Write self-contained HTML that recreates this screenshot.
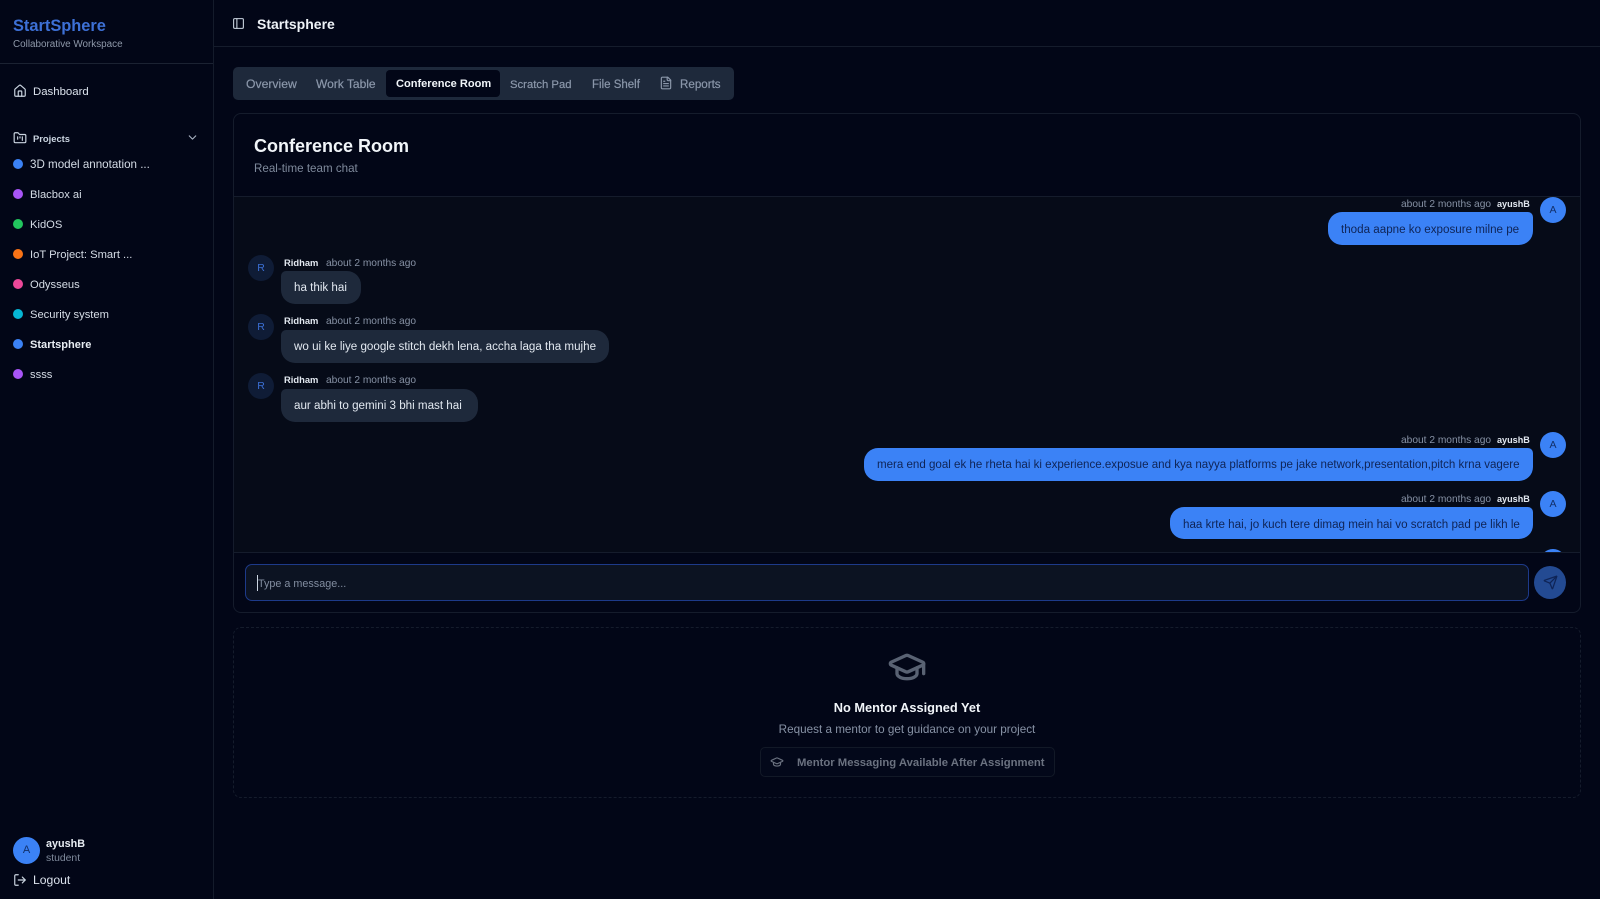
<!DOCTYPE html>
<html><head><meta charset="utf-8"><title>Startsphere</title>
<style>
*{box-sizing:border-box;margin:0;padding:0}
html,body{width:1600px;height:899px;overflow:hidden;background:#020617;font-family:"Liberation Sans",sans-serif;color:#e2e8f0}
#w{position:absolute;left:0;top:0;width:1600px;height:899px;filter:blur(.3px)}
.a{position:absolute}
.t{position:absolute;height:20px;line-height:20px;white-space:nowrap;font-size:12.4px}
.dot{position:absolute;left:13px;width:10px;height:10px;border-radius:50%}
.b{position:absolute;height:33px;line-height:35px;font-size:11.62px;white-space:nowrap}
.bo{background:#1e293b;color:#e2e8f0;border-radius:5px 14px 14px 14px;padding-left:13px;line-height:34px}
.bm{background:#3b82f6;color:#0f2456;border-radius:14px 5px 14px 14px;padding-left:13px}
.av{position:absolute;width:26px;height:26px;border-radius:50%;text-align:center;line-height:26px;font-size:10.5px}
.ar{background:#0f1c36;color:#3b6fd4;left:248px}
.am{background:#3b82f6;color:#12306b;left:1540px}
.nm{font-size:9.4px;font-weight:bold;color:#e2e8f0}
.tm{font-size:10.2px;color:#8792a5}
.tab{color:#8b97aa;font-weight:500;-webkit-text-stroke:.2px #8b97aa}
.p{left:30px;font-size:11.2px;color:#d5dce6}
svg{position:absolute;fill:none;stroke-linecap:round;stroke-linejoin:round}
</style></head><body><div id="w">

<!-- sidebar -->
<div class="a" style="left:0;top:0;width:214px;height:899px;background:#020617;border-right:1px solid #141b2b"></div>
<div class="a" style="left:0;top:63px;width:213px;height:1px;background:#1b2232"></div>
<div class="t" style="left:13px;top:16px;font-size:16.4px;font-weight:bold;color:#3d70d6">StartSphere</div>
<div class="t" style="left:13px;top:35px;font-size:9.9px;color:#8f99aa">Collaborative Workspace</div>

<svg style="left:13px;top:84px" width="14" height="14" viewBox="0 0 24 24" stroke="#cbd5e1" stroke-width="2"><path d="M15 21v-8a1 1 0 0 0-1-1h-4a1 1 0 0 0-1 1v8"/><path d="M3 10a2 2 0 0 1 .709-1.528l7-5.999a2 2 0 0 1 2.582 0l7 5.999A2 2 0 0 1 21 10v9a2 2 0 0 1-2 2H5a2 2 0 0 1-2-2z"/></svg>
<div class="t" style="left:33px;top:82px;font-size:11.4px;color:#dbe2ec">Dashboard</div>

<svg style="left:13px;top:131px" width="14" height="14" viewBox="0 0 24 24" stroke="#cbd5e1" stroke-width="2"><path d="M20 20a2 2 0 0 0 2-2V8a2 2 0 0 0-2-2h-7.9a2 2 0 0 1-1.69-.9L9.6 3.9A2 2 0 0 0 7.93 3H4a2 2 0 0 0-2 2v13a2 2 0 0 0 2 2Z"/><path d="M8 10v4M12 10v2M16 10v6"/></svg>
<div class="t" style="left:33px;top:129px;font-size:9.4px;font-weight:bold;color:#cbd5e1">Projects</div>
<svg style="left:186px;top:131px" width="13" height="13" viewBox="0 0 24 24" stroke="#aab4c4" stroke-width="2"><path d="m6 9 6 6 6-6"/></svg>

<div class="dot" style="top:159px;background:#3b82f6"></div><div class="t p" style="top:155px;font-size:11.6px">3D model annotation ...</div>
<div class="dot" style="top:189px;background:#a855f7"></div><div class="t p" style="top:185px">Blacbox ai</div>
<div class="dot" style="top:219px;background:#22c55e"></div><div class="t p" style="top:215px">KidOS</div>
<div class="dot" style="top:249px;background:#f97316"></div><div class="t p" style="top:245px">IoT Project: Smart ...</div>
<div class="dot" style="top:279px;background:#ec4899"></div><div class="t p" style="top:275px">Odysseus</div>
<div class="dot" style="top:309px;background:#06b6d4"></div><div class="t p" style="top:305px">Security system</div>
<div class="dot" style="top:339px;background:#3b82f6"></div><div class="t p" style="top:335px;font-size:11.05px;font-weight:bold;color:#e8edf3">Startsphere</div>
<div class="dot" style="top:369px;background:#a855f7"></div><div class="t p" style="top:365px">ssss</div>

<div class="a" style="left:13px;top:837px;width:27px;height:27px;border-radius:50%;background:#3b82f6;color:#12306b;text-align:center;line-height:27px;font-size:11px">A</div>
<div class="t" style="left:46px;top:834px;font-size:10.8px;font-weight:bold;color:#e8edf3">ayushB</div>
<div class="t" style="left:46px;top:849px;font-size:10.4px;color:#7f8a9c">student</div>
<svg style="left:13px;top:873px" width="14" height="14" viewBox="0 0 24 24" stroke="#cbd5e1" stroke-width="2"><path d="M9 21H5a2 2 0 0 1-2-2V5a2 2 0 0 1 2-2h4"/><path d="m16 17 5-5-5-5"/><path d="M21 12H9"/></svg>
<div class="t" style="left:33px;top:870px;font-size:12.2px;color:#dbe2ec">Logout</div>

<!-- header -->
<div class="a" style="left:214px;top:46px;width:1386px;height:1px;background:#151c2c"></div>
<svg style="left:232px;top:17px" width="13" height="13" viewBox="0 0 24 24" stroke="#cbd5e1" stroke-width="2"><rect x="3" y="3" width="18" height="18" rx="2"/><path d="M9 3v18"/></svg>
<div class="t" style="left:257px;top:14px;font-size:14px;font-weight:bold;color:#eef2f7">Startsphere</div>

<!-- tabs -->
<div class="a" style="left:233px;top:67px;width:501px;height:33px;background:#1e293b;border-radius:5px"></div>
<div class="a" style="left:386px;top:70px;width:114px;height:27px;background:#020617;border-radius:4px"></div>
<div class="t tab" style="left:246px;top:74px;font-size:12.2px">Overview</div>
<div class="t tab" style="left:316px;top:74px;font-size:12px">Work Table</div>
<div class="t" style="left:396px;top:74px;font-size:11.05px;font-weight:bold;color:#f1f5f9">Conference Room</div>
<div class="t tab" style="left:510px;top:74.6px;font-size:11.3px">Scratch Pad</div>
<div class="t tab" style="left:592px;top:74.6px;font-size:11.5px">File Shelf</div>
<svg style="left:659px;top:76px" width="14" height="14" viewBox="0 0 24 24" stroke="#8b97aa" stroke-width="2"><path d="M15 2H6a2 2 0 0 0-2 2v16a2 2 0 0 0 2 2h12a2 2 0 0 0 2-2V7Z"/><path d="M14 2v4a2 2 0 0 0 2 2h4"/><path d="M10 9H8M16 13H8M16 17H8"/></svg>
<div class="t tab" style="left:680px;top:74.6px;font-size:11.6px">Reports</div>

<!-- chat card -->
<div class="a" style="left:233px;top:113px;width:1348px;height:500px;border:1px solid #151c2c;border-radius:8px;background:#020617;overflow:hidden">
  <div class="a" style="left:0;top:82px;width:1346px;height:357px;background:#060b18;border-top:1px solid #151c2c;border-bottom:1px solid #151c2c"></div>
  <div class="a" style="left:1306px;top:435px;width:26px;height:26px;border-radius:50%;background:#3b82f6;clip-path:inset(0 0 23px 0)"></div>
</div>
<div class="t" style="left:254px;top:136px;font-size:18px;font-weight:bold;color:#f1f5f9">Conference Room</div>
<div class="t" style="left:254px;top:158.6px;font-size:11.6px;color:#7f8a9c">Real-time team chat</div>

<!-- messages -->
<div class="t tm" style="left:1401px;top:194.5px">about 2 months ago</div><div class="t nm" style="left:1497px;top:193.5px;font-size:9.1px">ayushB</div>
<div class="av am" style="top:197px">A</div>
<div class="b bm" style="left:1328px;top:212px;width:205px">thoda aapne ko exposure milne pe</div>

<div class="av ar" style="top:255px">R</div>
<div class="t nm" style="left:284px;top:252.5px">Ridham</div><div class="t tm" style="left:326px;top:253.5px">about 2 months ago</div>
<div class="b bo" style="left:281px;top:271px;width:80px">ha thik hai</div>

<div class="av ar" style="top:314px">R</div>
<div class="t nm" style="left:284px;top:310.5px">Ridham</div><div class="t tm" style="left:326px;top:311.5px">about 2 months ago</div>
<div class="b bo" style="left:281px;top:330px;width:328px">wo ui ke liye google stitch dekh lena, accha laga tha mujhe</div>

<div class="av ar" style="top:373px">R</div>
<div class="t nm" style="left:284px;top:369.5px">Ridham</div><div class="t tm" style="left:326px;top:370.5px">about 2 months ago</div>
<div class="b bo" style="left:281px;top:389px;width:197px">aur abhi to gemini 3 bhi mast hai</div>

<div class="t tm" style="left:1401px;top:430.5px">about 2 months ago</div><div class="t nm" style="left:1497px;top:429.5px;font-size:9.1px">ayushB</div>
<div class="av am" style="top:432px">A</div>
<div class="b bm" style="left:864px;top:448px;width:669px;font-size:11.56px">mera end goal ek he rheta hai ki experience.exposue and kya nayya platforms pe jake network,presentation,pitch krna vagere</div>

<div class="t tm" style="left:1401px;top:489.5px">about 2 months ago</div><div class="t nm" style="left:1497px;top:488.5px;font-size:9.1px">ayushB</div>
<div class="av am" style="top:491px">A</div>
<div class="b bm" style="left:1170px;top:507px;width:363px;height:32px">haa krte hai, jo kuch tere dimag mein hai vo scratch pad pe likh le</div>

<!-- input -->
<div class="a" style="left:245px;top:564px;width:1284px;height:37px;border:1px solid #1d3a8a;border-radius:7px;background:#0c1322"></div>
<div class="a" style="left:257px;top:575px;width:1px;height:16px;background:#cbd5e1"></div>
<div class="t" style="left:258px;top:574px;font-size:10.8px;color:#828da0">Type a message...</div>
<div class="a" style="left:1534px;top:566px;width:32px;height:33px;border-radius:50%;background:#234a92"></div>
<svg style="left:1543px;top:575px" width="15" height="15" viewBox="0 0 24 24" stroke="#0f2456" stroke-width="2"><path d="M14.536 21.686a.5.5 0 0 0 .937-.024l6.5-19a.496.496 0 0 0-.635-.635l-19 6.5a.5.5 0 0 0-.024.937l7.93 3.18a2 2 0 0 1 1.112 1.11z"/><path d="m21.854 2.147-10.94 10.939"/></svg>

<!-- mentor -->
<div class="a" style="left:233px;top:627px;width:1348px;height:171px;border:1px dashed #151c2c;border-radius:8px"></div>
<svg style="left:887px;top:647px" width="40" height="40" viewBox="0 0 24 24" stroke="#596273" stroke-width="2"><path d="M21.42 10.922a1 1 0 0 0-.019-1.838L12.83 5.18a2 2 0 0 0-1.66 0L2.6 9.08a1 1 0 0 0 0 1.832l8.57 3.908a2 2 0 0 0 1.66 0z"/><path d="M22 10v6"/><path d="M6 12.5V16a6 3 0 0 0 12 0v-3.5"/></svg>
<div class="t" style="left:707px;width:400px;text-align:center;top:698px;font-size:12.8px;font-weight:bold;color:#f1f5f9">No Mentor Assigned Yet</div>
<div class="t" style="left:707px;width:400px;text-align:center;top:720px;font-size:11.7px;color:#8792a5">Request a mentor to get guidance on your project</div>
<div class="a" style="left:760px;top:747px;width:295px;height:30px;border:1px solid #121927;border-radius:5px;background:#03081a"></div>
<svg style="left:770px;top:755px" width="14" height="14" viewBox="0 0 24 24" stroke="#6b7280" stroke-width="2"><path d="M21.42 10.922a1 1 0 0 0-.019-1.838L12.83 5.18a2 2 0 0 0-1.66 0L2.6 9.08a1 1 0 0 0 0 1.832l8.57 3.908a2 2 0 0 0 1.66 0z"/><path d="M6 12.5V16a6 3 0 0 0 12 0v-3.5"/></svg>
<div class="t" style="left:797px;top:753px;font-size:11.3px;font-weight:bold;color:#6b7280">Mentor Messaging Available After Assignment</div>

</div></body></html>
